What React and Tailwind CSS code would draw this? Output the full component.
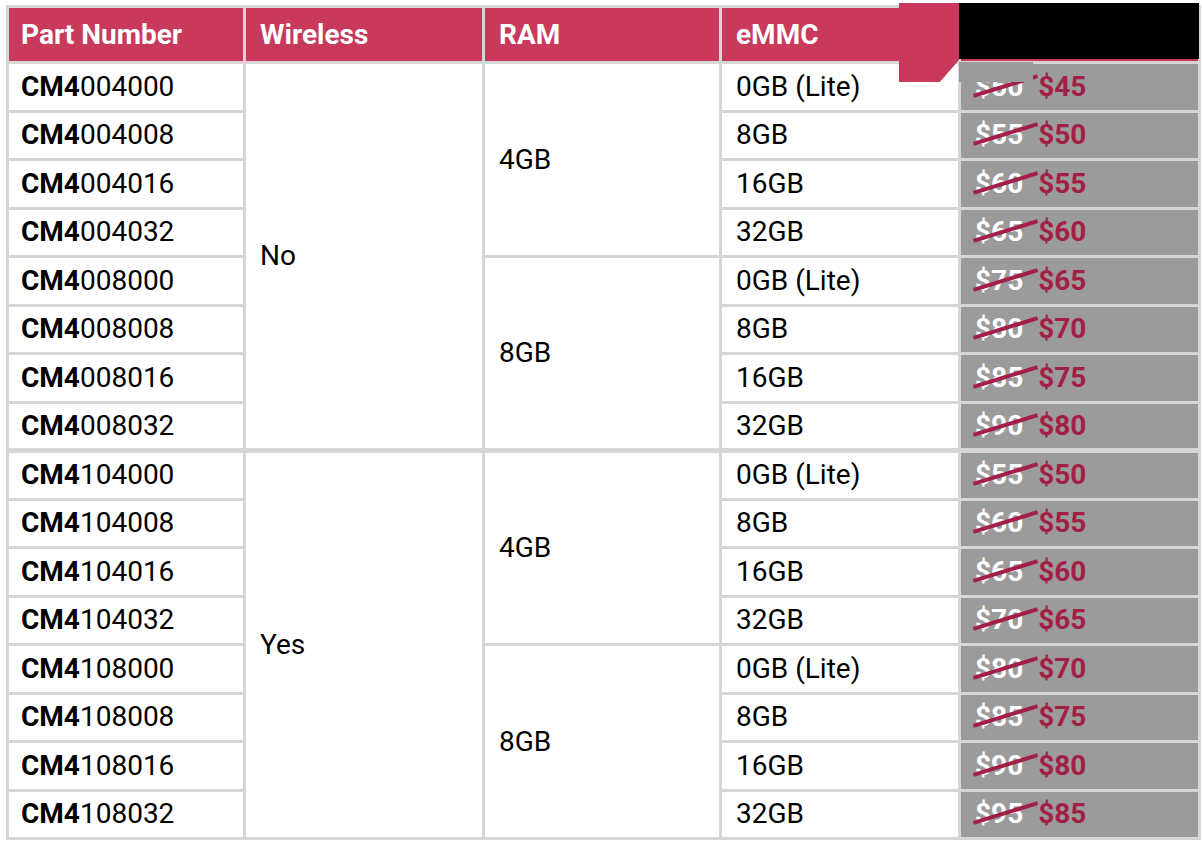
const PINK = 'bg-[#c8395b]'

const GROUPS = [
  { wireless: 'No', code: '0', rams: [
    { ram: '4GB', code: '04', prices: [[50, 45], [55, 50], [60, 55], [65, 60]] },
    { ram: '8GB', code: '08', prices: [[75, 65], [80, 70], [85, 75], [90, 80]] },
  ] },
  { wireless: 'Yes', code: '1', rams: [
    { ram: '4GB', code: '04', prices: [[55, 50], [60, 55], [65, 60], [70, 65]] },
    { ram: '8GB', code: '08', prices: [[80, 70], [85, 75], [90, 80], [95, 85]] },
  ] },
]

const EMMC = [
  { label: '0GB (Lite)', code: '000' },
  { label: '8GB', code: '008' },
  { label: '16GB', code: '016' },
  { label: '32GB', code: '032' },
]

const cell = 'border-[3px] border-[#d6d6d6] px-[14px] align-middle'

function Price({ was, now }) {
  return (
    <div className="flex items-center gap-[15px] font-bold">
      <span className="relative text-white">
        ${was}
        <span className="absolute left-[-3px] top-1/2 w-[67px] h-[4px] -mt-[3px] bg-[#a21f47] -rotate-[17deg]" />
      </span>
      <span className="text-[#a21f47]">${now}</span>
    </div>
  )
}

export default function App() {
  const rows = []
  GROUPS.forEach((g, gi) => {
    g.rams.forEach((r, ri) => {
      EMMC.forEach((e, ei) => {
        const first = ri === 0 && ei === 0
        const sep = gi > 0 && first ? 'border-t-[5px]' : ''
        rows.push(
          <tr key={`${gi}-${ri}-${ei}`} className="h-[48.5px]">
            <td className={`${cell} ${sep} pl-[12px]`}>
              <b>CM4</b>{g.code}{r.code}{e.code}
            </td>
            {first && <td rowSpan={8} className={`${cell} ${sep}`}>{g.wireless}</td>}
            {ei === 0 && <td rowSpan={4} className={`${cell} ${sep}`}>{r.ram}</td>}
            <td className={`${cell} ${sep}`}>{e.label}</td>
            <td className={`${cell} ${sep} bg-[#9c9b9b] px-[5px]`}>
              <Price was={r.prices[ei][0]} now={r.prices[ei][1]} />
            </td>
          </tr>
        )
      })
    })
  })

  return (
    <div className="relative w-[1202px] h-[841px] bg-white overflow-hidden font-['Roboto',sans-serif] text-[28px] text-black">
      <div className="pt-[5px] pl-[6px]">
        <table className="table-fixed border-collapse w-[1192px]">
          <colgroup>
            <col className="w-[237px]" />
            <col className="w-[239px]" />
            <col className="w-[237px]" />
            <col className="w-[239px]" />
            <col className="w-[240px]" />
          </colgroup>
          <thead>
            <tr className="h-[56px]">
              {['Part Number', 'Wireless', 'RAM', 'eMMC', ''].map((h, i) => (
                <th key={h} className={`${cell} ${PINK} ${i === 0 ? 'pl-[12px]' : ''} text-left font-bold text-white text-[28px]`}>{h}</th>
              ))}
            </tr>
          </thead>
          <tbody>{rows}</tbody>
        </table>
      </div>

      {/* pasted-over patch on the price header */}
      <div className={`absolute left-[899px] top-[3px] w-[60px] h-[79px] ${PINK} [clip-path:polygon(0_0,100%_0,100%_72%,68%_100%,0_100%)]`} />
      <div className="absolute left-[959px] top-[62px] w-[74px] h-[20px] bg-[#9c9b9b]" />
      <div className="absolute left-[959px] top-[3px] w-[240px] h-[56px] bg-black" />
    </div>
  )
}
